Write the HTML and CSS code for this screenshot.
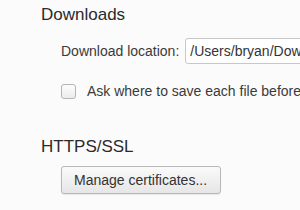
FILE: index.html
```html
<!DOCTYPE html>
<html lang="en">
  <head>
    <meta charset="UTF-8" />
    <title>Settings</title>
    <link rel="stylesheet" href="styles.css">
  </head>
  <body>
    <!-- Downloads -->
    <section class="section">
      <h3>Downloads</h3>
      <div class="row">
        <label for="location">Download location:</label>
        <input type="text" id="location" class="path" value="/Users/bryan/Downloads" readonly />
      </div>
      <div class="row check-row">
        <input type="checkbox" id="ask" class="check" />
        <label for="ask">Ask where to save each file before downloading</label>
      </div>
    </section>

    <!-- HTTPS/SSL -->
    <section class="section ssl">
      <h3>HTTPS/SSL</h3>
      <div class="row">
        <button class="btn">Manage certificates...</button>
      </div>
    </section>
  </body>
</html>
```

FILE: styles.css
```css
* {
  margin: 0;
  padding: 0;
  box-sizing: border-box;
}

body {
  font-family: "Liberation Sans", Arial, sans-serif;
  background: #fbfbfb;
  color: #303030;
  padding: 5px 0 0 41px;
  width: 300px;
  height: 210px;
  overflow: hidden;
}

h3 {
  font-size: 17px;
  line-height: 20px;
  font-weight: normal;
  color: #2a2a2a;
}

.row {
  display: flex;
  align-items: center;
  padding-left: 20px;
  font-size: 14px;
  color: #3a3a3a;
  white-space: nowrap;
}

.row:first-of-type {
  margin-top: 13px;
}

.path {
  margin-left: 6px;
  width: 200px;
  height: 26px;
  padding: 0 4px;
  font: inherit;
  color: #333;
  background: #fff;
  border: 1px solid #c8c8c8;
  border-radius: 3px;
  flex-shrink: 0;
}

.check-row {
  margin-top: 18px;
  line-height: 18px;
}

.check {
  appearance: none;
  width: 15px;
  height: 15px;
  margin-right: 11px;
  border: 1px solid #b4b4b4;
  border-radius: 3px;
  background: linear-gradient(#fdfdfd, #ececec);
  flex-shrink: 0;
}

.ssl {
  margin-top: 37px;
}

.ssl .row:first-of-type {
  margin-top: 9px;
}

.btn {
  width: 160px;
  height: 28px;
  padding: 0 12px;
  text-align: left;
  font: inherit;
  color: #333;
  border: 1px solid #b8b8b8;
  border-radius: 3px;
  background: linear-gradient(#fafafa, #e6e6e6);
  box-shadow: 0 1px 1px rgba(0, 0, 0, 0.08);
}
```
